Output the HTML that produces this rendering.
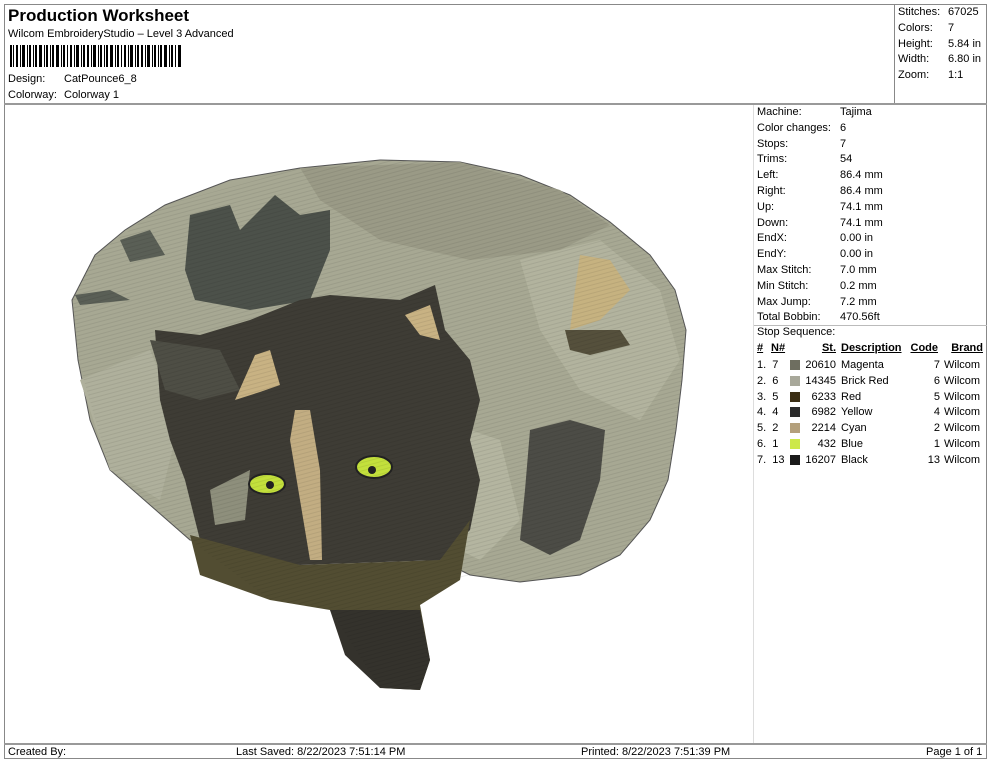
<!DOCTYPE html>
<html><head><meta charset="utf-8"><style>
body{margin:0;width:990px;height:762px;background:#fff;font-family:"Liberation Sans",sans-serif;color:#000;position:relative;overflow:hidden}
.a{position:absolute;white-space:nowrap}
.t{font-size:11px}
</style></head><body>
<div class="a" style="left:4px;top:4px;width:983px;height:755px;border:1px solid #888;box-sizing:border-box"></div>
<div class="a" style="left:4px;top:103px;width:983px;height:2px;background:#999"></div>
<div class="a" style="left:894px;top:4px;width:1px;height:99px;background:#888"></div>
<div class="a" style="left:753px;top:105px;width:1px;height:639px;background:#ddd"></div>
<div class="a" style="left:4px;top:743px;width:983px;height:2px;background:#999"></div>

<div class="a" style="left:8px;top:6px;font-size:17px;font-weight:bold">Production Worksheet</div>
<div class="a t" style="left:8px;top:28px">Wilcom EmbroideryStudio – Level 3 Advanced</div>
<svg class="a" style="left:10px;top:45px" width="172" height="22">
<g fill="#000">
<rect x="0" y="0" width="2" height="22"/><rect x="3" y="0" width="1" height="22"/><rect x="6" y="0" width="2" height="22"/><rect x="10" y="0" width="1" height="22"/><rect x="12" y="0" width="3" height="22"/><rect x="17" y="0" width="1" height="22"/><rect x="19" y="0" width="2" height="22"/><rect x="23" y="0" width="1" height="22"/><rect x="25" y="0" width="2" height="22"/><rect x="29" y="0" width="3" height="22"/><rect x="34" y="0" width="1" height="22"/><rect x="36" y="0" width="2" height="22"/><rect x="40" y="0" width="1" height="22"/><rect x="42" y="0" width="2" height="22"/><rect x="46" y="0" width="3" height="22"/><rect x="51" y="0" width="1" height="22"/><rect x="53" y="0" width="2" height="22"/><rect x="57" y="0" width="1" height="22"/><rect x="60" y="0" width="2" height="22"/><rect x="64" y="0" width="1" height="22"/><rect x="66" y="0" width="3" height="22"/><rect x="71" y="0" width="1" height="22"/><rect x="73" y="0" width="2" height="22"/><rect x="77" y="0" width="2" height="22"/><rect x="81" y="0" width="1" height="22"/><rect x="83" y="0" width="3" height="22"/><rect x="88" y="0" width="1" height="22"/><rect x="90" y="0" width="2" height="22"/><rect x="94" y="0" width="1" height="22"/><rect x="96" y="0" width="2" height="22"/><rect x="100" y="0" width="3" height="22"/><rect x="105" y="0" width="1" height="22"/><rect x="107" y="0" width="2" height="22"/><rect x="111" y="0" width="1" height="22"/><rect x="114" y="0" width="2" height="22"/><rect x="118" y="0" width="1" height="22"/><rect x="120" y="0" width="3" height="22"/><rect x="125" y="0" width="1" height="22"/><rect x="127" y="0" width="2" height="22"/><rect x="131" y="0" width="2" height="22"/><rect x="135" y="0" width="1" height="22"/><rect x="137" y="0" width="3" height="22"/><rect x="142" y="0" width="1" height="22"/><rect x="144" y="0" width="2" height="22"/><rect x="148" y="0" width="1" height="22"/><rect x="150" y="0" width="2" height="22"/><rect x="154" y="0" width="3" height="22"/><rect x="159" y="0" width="1" height="22"/><rect x="161" y="0" width="2" height="22"/><rect x="165" y="0" width="1" height="22"/><rect x="168" y="0" width="3" height="22"/>
</g></svg>
<div class="a t" style="left:8px;top:73px">Design:</div><div class="a t" style="left:64px;top:73px">CatPounce6_8</div>
<div class="a t" style="left:8px;top:89px">Colorway:</div><div class="a t" style="left:64px;top:89px">Colorway 1</div>

<div class="a t" style="left:898px;top:5px;line-height:15.8px">Stitches:<br>Colors:<br>Height:<br>Width:<br>Zoom:</div>
<div class="a t" style="left:948px;top:5px;line-height:15.8px">67025<br>7<br>5.84 in<br>6.80 in<br>1:1</div>

<div class="a t" style="left:757px;top:105px;line-height:15.8px">Machine:<br>Color changes:<br>Stops:<br>Trims:<br>Left:<br>Right:<br>Up:<br>Down:<br>EndX:<br>EndY:<br>Max Stitch:<br>Min Stitch:<br>Max Jump:<br>Total Bobbin:</div>
<div class="a t" style="left:840px;top:105px;line-height:15.8px">Tajima<br>6<br>7<br>54<br>86.4 mm<br>86.4 mm<br>74.1 mm<br>74.1 mm<br>0.00 in<br>0.00 in<br>7.0 mm<br>0.2 mm<br>7.2 mm<br>470.56ft</div>
<div class="a" style="left:754px;top:325px;width:233px;height:1px;background:#bbb"></div>
<div class="a t" style="left:757px;top:326px">Stop Sequence:</div>
<div class="a t" style="left:757px;top:342px;width:228px;height:16px;font-weight:bold">
<span class="a" style="left:0;text-decoration:underline">#</span><span class="a" style="left:14px;text-decoration:underline">N#</span><span class="a" style="right:149px;text-decoration:underline">St.</span><span class="a" style="left:84px;text-decoration:underline">Description</span><span class="a" style="right:47px;text-decoration:underline">Code</span><span class="a" style="right:2px;text-decoration:underline">Brand</span></div>
<div class="a t" style="left:757px;top:358px;line-height:15.8px">1.&nbsp; 7<br>2.&nbsp; 6<br>3.&nbsp; 5<br>4.&nbsp; 4<br>5.&nbsp; 2<br>6.&nbsp; 1<br>7.&nbsp; 13</div>
<div class="a" style="left:790px;top:360px;width:10px;line-height:0">
<div style="width:10px;height:10px;background:#6e6e60;margin-bottom:5.8px"></div>
<div style="width:10px;height:10px;background:#a8a89a;margin-bottom:5.8px"></div>
<div style="width:10px;height:10px;background:#3b2e14;margin-bottom:5.8px"></div>
<div style="width:10px;height:10px;background:#2b2b2b;margin-bottom:5.8px"></div>
<div style="width:10px;height:10px;background:#b4a07c;margin-bottom:5.8px"></div>
<div style="width:10px;height:10px;background:#cde84a;margin-bottom:5.8px"></div>
<div style="width:10px;height:10px;background:#1a1a1a"></div></div>
<div class="a t" style="left:800px;width:36px;text-align:right;top:358px;line-height:15.8px">20610<br>14345<br>6233<br>6982<br>2214<br>432<br>16207</div>
<div class="a t" style="left:841px;top:358px;line-height:15.8px">Magenta<br>Brick Red<br>Red<br>Yellow<br>Cyan<br>Blue<br>Black</div>
<div class="a t" style="left:900px;width:40px;text-align:right;top:358px;line-height:15.8px">7<br>6<br>5<br>4<br>2<br>1<br>13</div>
<div class="a t" style="left:944px;top:358px;line-height:15.8px">Wilcom<br>Wilcom<br>Wilcom<br>Wilcom<br>Wilcom<br>Wilcom<br>Wilcom</div>

<svg class="a" style="left:0;top:105px" width="752" height="638" viewBox="0 105 752 638">
<defs><pattern id="st" width="4" height="4" patternUnits="userSpaceOnUse" patternTransform="rotate(75)"><rect width="1" height="4" fill="#000" opacity=".07"/></pattern></defs>
<path d="M300 168 L380 160 L460 162 L520 175 L570 195 L610 222 L650 255 L675 290 L686 330 L682 380 L676 430 L668 480 L650 520 L620 555 L580 575 L520 582 L470 575 L440 560 L300 560 L190 540 L150 505 L110 470 L90 420 L78 360 L72 300 L95 255 L125 230 L165 205 L230 180 Z" fill="#a7a893" stroke="#555" stroke-width="1"/>
<path d="M300 168 L460 162 L560 190 L610 225 L560 250 L470 260 L380 240 L320 200 Z" fill="#9a9a86"/>
<path d="M520 260 L600 240 L660 290 L680 360 L640 420 L580 390 L540 330 Z" fill="#b2b39e"/>
<path d="M80 380 L150 350 L180 420 L160 500 L110 470 Z" fill="#afb09c"/>
<path d="M440 420 L500 440 L520 520 L480 560 L440 540 Z" fill="#b4b5a0"/>
<path d="M190 215 L230 205 L240 230 L275 195 L300 215 L330 210 L330 250 L310 300 L250 310 L195 300 L185 270 Z" fill="#4c514a"/>
<path d="M120 240 L150 230 L165 255 L130 262 Z M75 295 L110 290 L130 300 L80 305 Z" fill="#5a5f56"/>
<path d="M155 330 L200 335 L250 320 L300 300 L330 295 L400 300 L435 285 L445 330 L470 360 L480 400 L470 440 L480 480 L470 530 L440 560 L300 565 L230 560 L200 540 L185 480 L170 440 L160 400 Z" fill="#3e3c35"/>
<path d="M150 340 L220 350 L240 390 L200 400 L165 390 Z" fill="#4e4e45"/>
<path d="M210 490 L250 470 L245 520 L215 525 Z" fill="#8e8f7c"/>
<path d="M190 535 L300 565 L440 560 L470 520 L460 580 L420 605 L430 660 L420 690 L380 688 L350 650 L330 610 L270 600 L200 575 Z" fill="#524d32"/>
<path d="M330 610 L420 610 L430 660 L420 690 L380 688 L345 655 Z" fill="#34322c"/>
<path d="M295 410 L310 410 L320 470 L322 560 L310 560 L300 500 L290 440 Z" fill="#c2ad82"/>
<path d="M255 355 L270 350 L280 385 L260 392 L235 400 Z M405 315 L430 305 L440 340 L420 335 Z" fill="#c8b283"/>
<path d="M580 255 L610 260 L630 290 L600 320 L570 330 L575 290 Z" fill="#c6b280"/>
<path d="M530 430 L570 420 L605 430 L600 480 L580 540 L550 555 L520 540 L525 490 Z" fill="#4c4c46"/>
<path d="M565 330 L620 330 L630 345 L590 355 L570 350 Z" fill="#55503c"/>
<ellipse cx="267" cy="484" rx="18" ry="10" fill="#c3e03c" stroke="#222" stroke-width="2"/>
<ellipse cx="374" cy="467" rx="18" ry="11" fill="#c3e03c" stroke="#222" stroke-width="2"/>
<circle cx="270" cy="485" r="4" fill="#222"/><circle cx="372" cy="470" r="4" fill="#222"/>
<path d="M300 168 L380 160 L460 162 L520 175 L570 195 L610 222 L650 255 L675 290 L686 330 L682 380 L676 430 L668 480 L650 520 L620 555 L580 575 L520 582 L470 575 L460 580 L420 605 L430 660 L420 690 L380 688 L330 610 L270 600 L190 540 L110 470 L78 360 L72 300 L95 255 L165 205 Z" fill="url(#st)"/>
</svg>

<div class="a t" style="left:8px;top:746px">Created By:</div>
<div class="a t" style="left:236px;top:746px">Last Saved: 8/22/2023 7:51:14 PM</div>
<div class="a t" style="left:581px;top:746px">Printed: 8/22/2023 7:51:39 PM</div>
<div class="a t" style="left:926px;top:746px">Page 1 of 1</div>
</body></html>
